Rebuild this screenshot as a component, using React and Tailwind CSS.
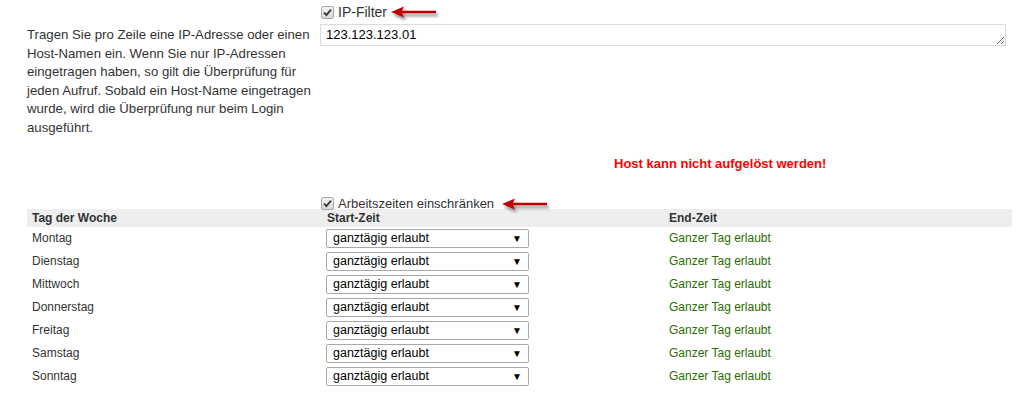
import React from "react";

const days = ["Montag", "Dienstag", "Mittwoch", "Donnerstag", "Freitag", "Samstag", "Sonntag"];

function Check() {
  return (
    <span className="inline-flex h-[13px] w-[13px] items-center justify-center rounded-[2px] border border-[#a8a8a8] bg-gradient-to-b from-[#f4f4f4] to-[#d8d8d8]">
      <svg width="9" height="9" viewBox="0 0 9 9">
        <path d="M1 4.6 L3.4 7 L8 1.6" fill="none" stroke="#3a3a3a" strokeWidth="1.9" />
      </svg>
    </span>
  );
}

function Arrow() {
  return (
    <svg width="52" height="18" viewBox="0 0 52 18" className="overflow-visible">
      <defs>
        <filter id="sh" x="-20%" y="-50%" width="150%" height="220%">
          <feGaussianBlur in="SourceAlpha" stdDeviation="1.4" />
          <feOffset dx="2" dy="2.5" result="b" />
          <feComponentTransfer><feFuncA type="linear" slope="0.45" /></feComponentTransfer>
          <feMerge><feMergeNode /><feMergeNode in="SourceGraphic" /></feMerge>
        </filter>
      </defs>
      <g filter="url(#sh)">
        <path d="M1 8 L14 2.5 L12 6.8 L46 6.8 L46 9.2 L12 9.2 L14 13.5 Z" fill="#c00000" />
      </g>
    </svg>
  );
}

function FakeSelect() {
  return (
    <div className="flex h-[19px] w-[203px] items-center justify-between rounded-[2px] border border-[#a9a9a9] bg-white pl-[6px] pr-[6px] text-[12.5px] text-black">
      <span>ganztägig erlaubt</span>
      <span className="text-[10px]">▼</span>
    </div>
  );
}

export default function App() {
  return (
    <div className="h-[395px] w-[1018px] bg-white text-[#333] [font-family:'Liberation_Sans',Arial,sans-serif]">
      <div className="flex pt-[4px]">
        <p className="ml-[27px] mt-[22px] w-[292px] shrink-0 text-[13.2px] leading-[18.6px]">
          Tragen Sie pro Zeile eine IP-Adresse oder einen Host-Namen ein. Wenn Sie nur IP-Adressen eingetragen haben, so gilt die Überprüfung für jeden Aufruf. Sobald ein Host-Name eingetragen wurde, wird die Überprüfung nur beim Login ausgeführt.
        </p>
        <div className="ml-[1px] flex-1">
          <div className="flex h-[16px] items-center pl-[1px]">
            <Check />
            <span className="ml-[4px] text-[14px]">IP-Filter</span>
            <span className="ml-[3px] mt-[2px]"><Arrow /></span>
          </div>
          <textarea
            readOnly
            defaultValue="123.123.123.01"
            className="mt-[4px] block h-[22px] w-[686px] resize-y overflow-hidden border border-[#ddd] px-[5px] py-0 text-[13px] leading-[20px] text-black outline-none"
          />
          <div className="mt-[108px] pl-[294px] text-[13px] font-bold text-[#ff0000]">Host kann nicht aufgelöst werden!</div>
        </div>
      </div>

      <div className="mt-[22px] flex h-[16px] items-center pl-[321px]">
        <Check />
        <span className="ml-[4px] text-[13px]">Arbeitszeiten einschränken</span>
        <span className="ml-[7px] mt-[2px]"><Arrow /></span>
      </div>

      <div className="ml-[27px] mr-[6px] mt-[-3px] text-[12px]">
        <div className="grid h-[18px] grid-cols-[295px_342px_1fr] items-center bg-[#eeeeee] font-bold">
          <span className="pl-[5px]">Tag der Woche</span>
          <span className="pl-[5px]">Start-Zeit</span>
          <span className="pl-[5px]">End-Zeit</span>
        </div>
        {days.map((d) => (
          <div key={d} className="grid h-[23px] grid-cols-[295px_342px_1fr] items-center">
            <span className="pl-[5px]">{d}</span>
            <span className="pl-[4px]"><FakeSelect /></span>
            <span className="pl-[5px] text-[#2b6e00]">Ganzer Tag erlaubt</span>
          </div>
        ))}
      </div>
    </div>
  );
}
